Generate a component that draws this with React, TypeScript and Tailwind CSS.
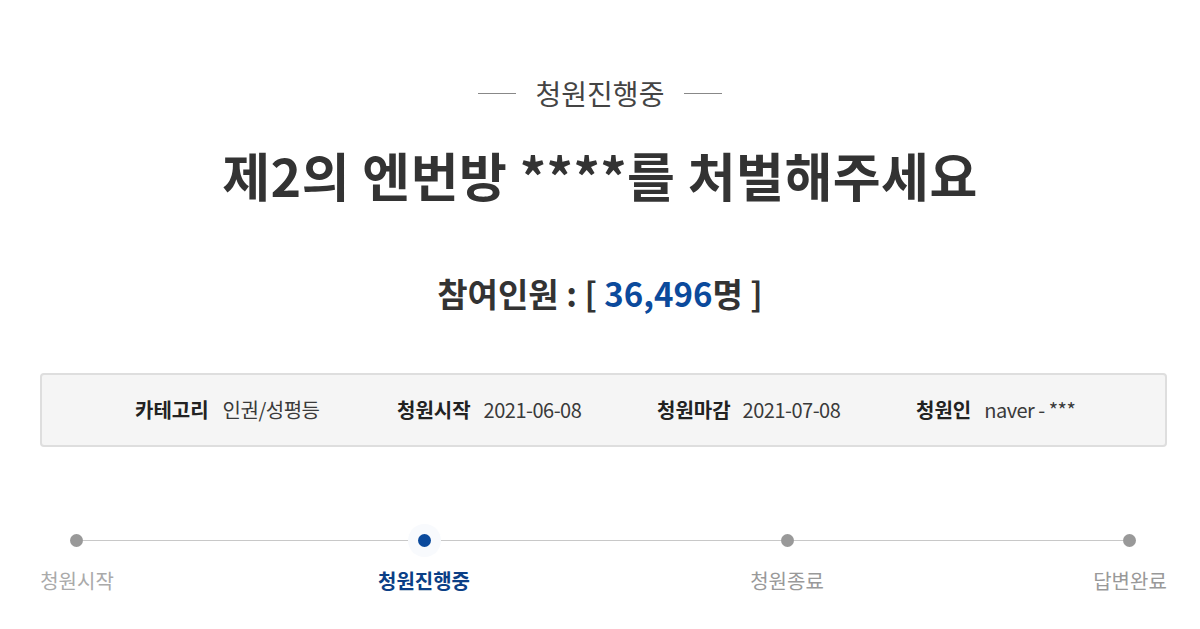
import React from "react";

const font = { fontFamily: '"Noto Sans CJK KR", "Noto Sans", sans-serif' };

export default function App() {
  return (
    <div className="w-[1200px] h-[629px] bg-white overflow-hidden text-[#333]" style={font}>
      {/* status */}
      <div className="flex items-center justify-center gap-[20px] pt-[75px]">
        <div className="w-[38px] h-px bg-[#888]" />
        <div className="text-[28px] leading-[36px] text-[#444]">청원진행중</div>
        <div className="w-[38px] h-px bg-[#888]" />
      </div>
      {/* title */}
      <h1 className="mt-[32px] text-center text-[52px] leading-[64px] font-bold text-[#333] tracking-[0.5px]">
        제2의 엔번방 ****를 처벌해주세요
      </h1>
      {/* count */}
      <div className="mt-[64px] text-center text-[33px] leading-[44px] font-bold text-[#333]">
        참여인원 : [ <span className="text-[#0b4a9c]">36,496</span>명 ]
      </div>
      {/* info box */}
      <div className="ml-[40px] w-[1127px] mt-[58px] h-[74px] rounded-[4px] border-2 border-[#dedede] bg-[#f5f5f5] flex items-center pl-[93px] text-[20px]">
        <div className="flex items-center w-[262px]">
          <span className="font-bold text-[#222]">카테고리</span>
          <span className="ml-[14px] text-[#3a3a3a] tracking-[-0.5px]">인권/성평등</span>
        </div>
        <div className="flex items-center w-[260px]">
          <span className="font-bold text-[#222]">청원시작</span>
          <span className="ml-[13px] text-[#3a3a3a] tracking-[-0.5px]">2021-06-08</span>
        </div>
        <div className="flex items-center w-[259px]">
          <span className="font-bold text-[#222]">청원마감</span>
          <span className="ml-[12px] text-[#3a3a3a] tracking-[-0.5px]">2021-07-08</span>
        </div>
        <div className="flex items-center">
          <span className="font-bold text-[#222]">청원인</span>
          <span className="ml-[13px] text-[#3a3a3a] tracking-[-0.5px]">naver - ***</span>
        </div>
      </div>
      {/* progress */}
      <div className="mt-[87px] flex items-center pl-[70px]">
        <div className="w-[13px] h-[13px] rounded-full bg-[#999]" />
        <div className="w-[335px] h-px bg-[#c8c8c8]" />
        <div className="relative w-[13px] h-[13px]">
          <div className="absolute -inset-[10px] rounded-full bg-[#f8fafd]" />
          <div className="relative w-[13px] h-[13px] rounded-full bg-[#0b4a9c]" />
        </div>
        <div className="w-[350px] h-px bg-[#c8c8c8]" />
        <div className="w-[13px] h-[13px] rounded-full bg-[#999]" />
        <div className="w-[329px] h-px bg-[#c8c8c8]" />
        <div className="w-[13px] h-[13px] rounded-full bg-[#999]" />
      </div>
      <div className="mt-[20px] flex text-[20px] leading-[28px]">
        <div className="ml-[27px] w-[100px] text-center text-[#aaa]">청원시작</div>
        <div className="ml-[247px] w-[100px] text-center text-[#0b3f86] font-bold">청원진행중</div>
        <div className="ml-[263px] w-[100px] text-center text-[#999]">청원종료</div>
        <div className="ml-[243px] w-[100px] text-center text-[#999]">답변완료</div>
      </div>
    </div>
  );
}
